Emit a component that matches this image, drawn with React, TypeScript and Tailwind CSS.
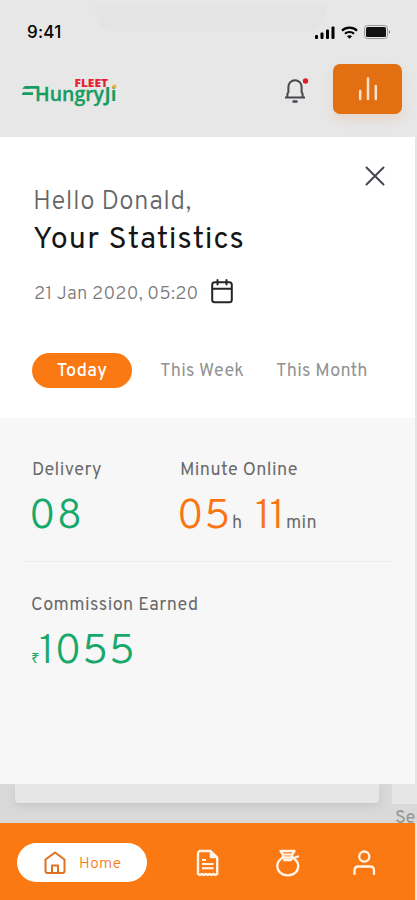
function StatusBar() {
  return (
    <div className="relative flex h-[50px] items-start justify-between pt-[22px] pr-[26px] pl-[27px] text-black">
      <div className="absolute top-[4px] left-[95px] h-[28px] w-[231px] rounded-b-[20px] bg-[#e4e4e4]" />
      <span className="relative font-['Inter'] text-[17px] leading-5 font-medium tracking-[0.2px]">9:41</span>
      <div className="relative flex items-center gap-[6px] pt-[3px]">
        <svg width="20" height="13" viewBox="0 0 20 13" fill="currentColor">
          <rect x="0" y="9" width="3" height="4" rx="1" />
          <rect x="5.5" y="6.5" width="3" height="6.5" rx="1" />
          <rect x="11" y="3.5" width="3" height="9.5" rx="1" />
          <rect x="16.5" y="0.5" width="3" height="12.5" rx="1" />
        </svg>
        <svg width="17" height="13" viewBox="0 0 17 13" fill="none" stroke="currentColor" strokeWidth="2.2">
          <path d="M1 4.6C5.2.6 11.8.6 16 4.6" />
          <path d="M4 7.8C6.5 5.4 10.5 5.4 13 7.8" />
          <path d="M8.5 12.7 6 10.2q2.5-2 5 0z" fill="currentColor" stroke="none" />
        </svg>
        <svg width="27" height="14" viewBox="0 0 27 14">
          <rect x="0.5" y="0.5" width="23" height="13" rx="3" fill="none" stroke="#999" />
          <rect x="2" y="2" width="20" height="10" rx="1.5" fill="#111" />
          <path d="M25 5v4q2-2 0-4" fill="#777" />
        </svg>
      </div>
    </div>
  );
}

function Logo() {
  return (
    <svg width="98" height="32" viewBox="0 0 98 32" className="block">
      <path d="M3 11.4h14M1 17.6h10" stroke="#159c63" strokeWidth="2.8" />
      <path d="m3 10-3 2.8h8zM1 16.2l-1.4 2.8h8z" fill="#159c63" />
      <text x="13" y="24.5" textLength="69" lengthAdjust="spacingAndGlyphs" fontFamily="Open Sans, sans-serif" fontSize="20" fontWeight="600" fill="#159c63" stroke="#159c63" strokeWidth="0.3">
        Hungry
      </text>
      <text x="82.5" y="24.5" textLength="12" lengthAdjust="spacingAndGlyphs" fontFamily="Open Sans, sans-serif" fontSize="19" fontWeight="700" fill="#159c63">
        Ji
      </text>
      <circle cx="92.5" cy="10.6" r="2" fill="#f4b223" />
      <text x="52.5" y="11.4" textLength="33.5" lengthAdjust="spacingAndGlyphs" fontFamily="Open Sans, sans-serif" fontSize="10.5" fontWeight="800" fill="#e52332">
        FLEET
      </text>
    </svg>
  );
}

function Header() {
  return (
    <header className="h-[137px] bg-[#e7e7e7]">
      <StatusBar />
      <div className="flex items-start pl-[22px]">
        <div className="mt-[26px] w-[262px]">
          <Logo />
        </div>
        <svg className="mt-[27px]" width="26" height="28" viewBox="0 0 26 28" fill="none" stroke="#45484c" strokeWidth="2">
          <path d="M1 20.5h20M3.4 20V17l1-2V9.8a6.6 6.6 0 0 1 13.2 0V15l1 2v3" strokeLinejoin="round" />
          <path d="M8.5 24.5h5" strokeWidth="2.5" />
          <circle cx="21.5" cy="4" r="2.7" fill="#e31c2d" stroke="none" />
        </svg>
        <button className="mt-[14px] ml-[23px] flex h-[50px] w-[69px] items-center justify-center rounded-[7px] bg-[#e36f13] shadow-[0_6px_10px_#e2b99255]">
          <svg width="20" height="24" viewBox="0 0 20 24" stroke="#f8e0ca" strokeWidth="2.5" strokeLinecap="round">
            <path d="M2.2 14v8M10 1.5V22M17.8 9v13" />
          </svg>
        </button>
      </div>
    </header>
  );
}

function Summary() {
  return (
    <section className="h-[281px] w-[415px] bg-white">
      <div className="flex h-[51px] justify-end pt-[29px] pr-[30px]">
        <svg width="20" height="20" viewBox="0 0 20 20" stroke="#44474b" strokeWidth="2" strokeLinecap="round">
          <path d="m1.5 1.5 17 17M18.5 1.5l-17 17" />
        </svg>
      </div>
      <div className="pl-[33px]">
        <p className="h-[34px] text-[26px] leading-[30px] font-light tracking-[0.5px] text-[#666]">Hello Donald,</p>
        <h1 className="h-[38px] text-[30.5px] leading-[38px] font-normal tracking-[1.1px] text-[#151515]">Your Statistics</h1>
        <div className="mt-[18px] flex h-[26px] items-center pl-px">
          <span className="w-[177px] pt-[7px] text-[18.5px] leading-[26px] font-light tracking-[0.2px] text-[#7a7a7a]">21 Jan 2020, 05:20</span>
          <svg width="22" height="25" viewBox="0 0 22 25" fill="none" stroke="#252525" strokeWidth="2" strokeLinecap="round">
            <rect x="1.2" y="3.2" width="19.6" height="20" rx="2.5" />
            <path d="M6.5 1v4.5M15.5 1v4.5M2 9.7h18" />
          </svg>
        </div>
      </div>
      <div className="mt-[49px] flex h-[35px] items-center pl-[32px] text-[18px] tracking-[0.3px] text-[#929292]">
        <button className="h-[35px] w-[100px] rounded-full bg-[#fb7912] pt-[2px] font-medium text-white">Today</button>
        <span className="ml-[28px] w-[116px] pt-[2px]">This Week</span>
        <span className="pt-[2px]">This Month</span>
      </div>
    </section>
  );
}

function Stats() {
  return (
    <section className="h-[366px] w-[415px] bg-[#f7f7f7] pt-[40px] text-[#6a6a6a]">
      <div className="flex h-[103px] pl-[32px]">
        <div className="w-[148px]">
          <p className="text-[18px] leading-[26px] tracking-[0.4px]">Delivery</p>
          <p className="mt-[8px] -ml-[3px] text-[42px] leading-[52px] font-light tracking-[1.2px] text-[#16a96b]">08</p>
        </div>
        <div>
          <p className="text-[18px] leading-[26px] tracking-[0.4px]">Minute Online</p>
          <p className="mt-[8px] -ml-[3px] flex items-baseline leading-[52px]">
            <span className="w-[55px] text-[42px] font-light tracking-[0.8px] text-[#fb7412]">05</span>
            <span className="w-[23px] text-[18px]">h</span>
            <span className="w-[31px] text-[42px] font-light tracking-[-0.5px] text-[#fb7412]">11</span>
            <span className="text-[18px] tracking-[0.3px]">min</span>
          </p>
        </div>
      </div>
      <div className="mr-[22px] ml-[23px] h-px bg-[#ececec]" />
      <div className="pt-[31px] pl-[31px]">
        <p className="text-[18px] leading-[26px] tracking-[0.4px]">Commission Earned</p>
        <p className="mt-[8px] flex items-baseline leading-[52px] text-[#16a96b]">
          <span className="w-[8px] font-['Noto_Sans'] text-[15px]">₹</span>
          <span className="text-[42px] font-[350] tracking-[0.7px]">1055</span>
        </p>
      </div>
    </section>
  );
}

function CardsBehind() {
  return (
    <div className="flex h-[39px] items-start overflow-hidden bg-[#d9d9d9] pl-[15px]">
      <div className="h-[19px] w-[364px] rounded-b-[4px] bg-[#e6e6e6] shadow-[0_3px_10px_#c6c6c6]" />
      <div className="ml-[13px] w-[25px] shrink-0">
        <div className="h-[20px] bg-[#e6e6e6]" />
        <p className="pl-[3px] text-[18px] leading-[30px] font-medium text-[#999]">Se</p>
      </div>
    </div>
  );
}

function BottomNav() {
  return (
    <nav className="flex h-[77px] w-[415px] items-start bg-[#fb7912] pt-[20px] pl-[17px] text-[#fff5e9]">
      <button className="flex h-[39px] w-[130px] items-center rounded-full bg-white pl-[27px] text-[#fb7912]">
        <svg width="22" height="24" viewBox="0 0 22 24" fill="none" stroke="#df7020" strokeWidth="2" strokeLinejoin="round">
          <path d="M1.5 8.5 11 1.5l9.5 7v11.5a2 2 0 0 1-2 2h-15a2 2 0 0 1-2-2z" />
          <path d="M8 21.5v-7h6v7" />
        </svg>
        <span className="ml-[13px] pt-[4px] text-[15.5px] font-light tracking-[0.4px]">Home</span>
      </button>
      <svg className="mt-[6px] ml-[49px]" width="23" height="28" viewBox="0 0 23 28" fill="none" stroke="currentColor" strokeWidth="2.4" strokeLinejoin="round">
        <path d="M14.5 2H4.5a2.5 2.5 0 0 0-2.5 2.5V25l2 1 1.9-1 1.9 1 1.9-1 1.9 1 1.9-1 1.9 1 1.9-1 1.9 1 2-1V8.5z" />
        <path d="M14.5 2v6.5H21z" fill="currentColor" strokeWidth="1.5" />
        <path d="M6 11h4M6 15h11.5M6 19.3h11.5" strokeWidth="2" />
      </svg>
      <svg className="mt-[6px] ml-[57px]" width="24" height="28" viewBox="0 0 24 28" fill="none" stroke="currentColor" strokeWidth="2.3" strokeLinecap="round" strokeLinejoin="round">
        <path d="M4.5 2h14l-2.3 3.5v3H7v-3z" />
        <path d="M7.5 5.5h8" strokeWidth="1.8" />
        <path d="M7 8.5C3.2 10.7 1.3 13.6 1.3 17c0 5.5 4.3 9.3 10.5 9.3S22.3 22.500 22.300 17c0-3.400-2.400-6.300-5.900-8.500M16 9.500l6-2M8 11h7" />
      </svg>
      <svg className="mt-[7px] ml-[53px]" width="23" height="26" viewBox="0 0 23 26" fill="none" stroke="currentColor" strokeWidth="2.3" strokeLinecap="round">
        <circle cx="11.3" cy="6.6" r="5.1" />
        <path d="M1.5 24v-3.5q0-4 4-4h11.500q4 0 4 4V24" />
      </svg>
    </nav>
  );
}

export default function App() {
  return (
    <div className="h-[900px] w-[417px] overflow-hidden bg-[#e4e4e4] font-['Overpass','Roboto',sans-serif]">
      <Header />
      <Summary />
      <Stats />
      <CardsBehind />
      <BottomNav />
    </div>
  );
}
